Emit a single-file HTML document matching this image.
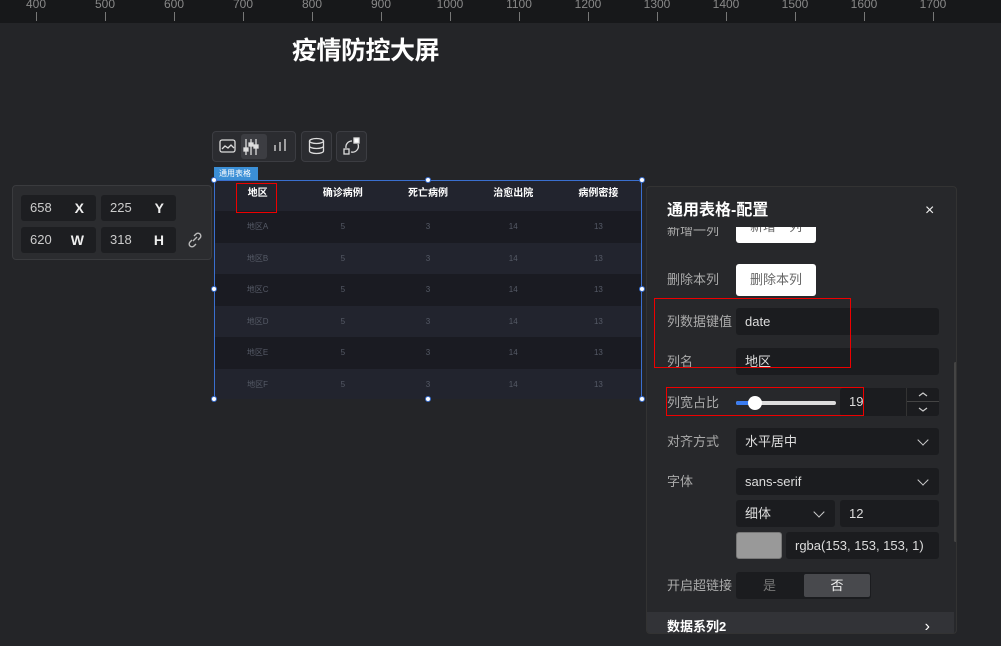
<!DOCTYPE html>
<html><head><meta charset="utf-8"><style>
*{box-sizing:border-box;margin:0;padding:0}
body{width:1001px;height:646px;overflow:hidden;background:#242528;font-family:"Liberation Sans","Noto Sans CJK SC",sans-serif;position:relative;color:#ddd}
.abs{position:absolute}
.ruler{left:0;top:0;width:1001px;height:23px;background:#17181a}
.rl{position:absolute;top:-3px;font-size:12px;color:#888;transform:translateX(-50%);line-height:14px}
.tk{position:absolute;top:12px;width:1px;height:9px;background:#777}
.title{left:292px;top:36px;font-size:25px;line-height:30px;font-weight:bold;color:#fff;letter-spacing:-0.5px}
.tb{background:#2b2c30;border:1px solid #3c3d42;border-radius:4px}
.pos{left:12px;top:185px;width:200px;height:75px;background:#2b2c2f;border:1px solid #3a3b3e;border-radius:4px}
.pf{position:absolute;width:75px;height:26px;background:#1d1e21;border-radius:3px;font-size:13px;color:#ccc;line-height:26px;padding-left:9px}
.pf b{position:absolute;right:12px;color:#eee;font-size:14px}
.tbl{left:214px;top:180px;width:428px;height:219px;border:1px solid #3a6fcf;background:#22242e}
.row{position:absolute;left:0;width:426px;height:31.5px;display:flex}
.row div{flex:1;text-align:center;font-size:8px;color:#555a66;line-height:31px}
.hd div{color:#fff;font-weight:bold;font-size:10px;line-height:26px}
.dot{position:absolute;width:6px;height:6px;border-radius:50%;background:#fff;border:1px solid #3a6fcf}
.panel{left:646px;top:186px;width:311px;height:448px;background:#27282b;border:1px solid #333;border-radius:4px;overflow:hidden}
.lab{position:absolute;left:20px;font-size:13px;color:#aaa;line-height:27px;height:27px}
.inp{position:absolute;background:#1b1c1f;border-radius:3px;font-size:13px;color:#ddd;padding-left:9px;line-height:27px;height:27px}
.btn{position:absolute;left:89px;width:80px;background:#fff;border-radius:3px;color:#666;font-size:13px;text-align:center}
.chev{position:absolute;right:12px;top:8px;width:8px;height:8px;border-right:1.5px solid #ccc;border-bottom:1.5px solid #ccc;transform:rotate(45deg)}
.red{position:absolute;border:1px solid #e00}
</style></head><body>
<div class="abs ruler">
<span class="rl" style="left:36px">400</span><span class="rl" style="left:105px">500</span><span class="rl" style="left:174px">600</span><span class="rl" style="left:243px">700</span><span class="rl" style="left:312px">800</span><span class="rl" style="left:381px">900</span><span class="rl" style="left:450px">1000</span><span class="rl" style="left:519px">1100</span><span class="rl" style="left:588px">1200</span><span class="rl" style="left:657px">1300</span><span class="rl" style="left:726px">1400</span><span class="rl" style="left:795px">1500</span><span class="rl" style="left:864px">1600</span><span class="rl" style="left:933px">1700</span>
<i class="tk" style="left:36px"></i><i class="tk" style="left:105px"></i><i class="tk" style="left:174px"></i><i class="tk" style="left:243px"></i><i class="tk" style="left:312px"></i><i class="tk" style="left:381px"></i><i class="tk" style="left:450px"></i><i class="tk" style="left:519px"></i><i class="tk" style="left:588px"></i><i class="tk" style="left:657px"></i><i class="tk" style="left:726px"></i><i class="tk" style="left:795px"></i><i class="tk" style="left:864px"></i><i class="tk" style="left:933px"></i>
</div>
<div class="abs title">疫情防控大屏</div>

<div class="abs tb" style="left:212px;top:131px;width:84px;height:31px"></div>
<div class="abs" style="left:241px;top:134px;width:26px;height:25px;background:#3c3d42;border-radius:3px"></div>
<svg class="abs" style="left:212px;top:131px" width="160" height="31" fill="none" stroke="#ddd" stroke-width="1.3">
<rect x="8" y="9" width="15" height="12" rx="2"/><path d="M10 18l3-3 3 2 3-3 3 3"/>
<path d="M34 8v16M39 8v16M44 8v16"/><rect x="32" y="17" width="4" height="3" fill="#ddd"/><rect x="37" y="12" width="4" height="3" fill="#ddd"/><rect x="42" y="14" width="4" height="3" fill="#ddd"/>
<path d="M63 20v-6M68 20v-9M73 20v-12"/>
</svg>
<div class="abs tb" style="left:301px;top:131px;width:31px;height:31px"></div>
<svg class="abs" style="left:301px;top:131px" width="31" height="31" fill="none" stroke="#ddd" stroke-width="1.3"><ellipse cx="15.5" cy="10" rx="7" ry="2.5"/><path d="M8.5 10v10c0 1.4 3 2.5 7 2.5s7-1.1 7-2.5V10M8.5 15c0 1.4 3 2.5 7 2.5s7-1.1 7-2.5"/></svg>
<div class="abs tb" style="left:336px;top:131px;width:31px;height:31px"></div>
<svg class="abs" style="left:336px;top:131px" width="31" height="31" fill="none" stroke="#ddd" stroke-width="1.3"><rect x="18" y="7" width="5" height="5" fill="#fff"/><rect x="8" y="18" width="5" height="5"/><path d="M10 17a6 6 0 0 1 6-7M22 13a6 6 0 0 1-7 8"/></svg>

<div class="abs pos">
<div class="pf" style="left:8px;top:9px">658<b>X</b></div>
<div class="pf" style="left:88px;top:9px">225<b>Y</b></div>
<div class="pf" style="left:8px;top:41px">620<b>W</b></div>
<div class="pf" style="left:88px;top:41px">318<b>H</b></div>
<svg style="position:absolute;left:174px;top:46px" width="16" height="16" fill="none" stroke="#bbb" stroke-width="1.4"><path d="M6 9l4-4M7 4l2-2a2.5 2.5 0 0 1 4 4l-2 2M9 12l-2 2a2.5 2.5 0 0 1-4-4l2-2"/></svg>
</div>

<div class="abs" style="left:214px;top:167px;width:44px;height:13px;background:#3b8fd6;font-size:8px;color:#fff;padding-left:5px;line-height:13px">通用表格</div>
<div class="abs tbl">
<div class="row hd" style="top:0;height:30px;background:#22242e"><div>地区</div><div>确诊病例</div><div>死亡病例</div><div>治愈出院</div><div>病例密接</div></div>
<div class="row" style="top:30px;background:#1a1b22"><div>地区A</div><div>5</div><div>3</div><div>14</div><div>13</div></div>
<div class="row" style="top:61.5px;background:#22242e"><div>地区B</div><div>5</div><div>3</div><div>14</div><div>13</div></div>
<div class="row" style="top:93px;background:#1a1b22"><div>地区C</div><div>5</div><div>3</div><div>14</div><div>13</div></div>
<div class="row" style="top:124.5px;background:#22242e"><div>地区D</div><div>5</div><div>3</div><div>14</div><div>13</div></div>
<div class="row" style="top:156px;background:#1a1b22"><div>地区E</div><div>5</div><div>3</div><div>14</div><div>13</div></div>
<div class="row" style="top:187.5px;background:#22242e;height:30px"><div>地区F</div><div>5</div><div>3</div><div>14</div><div>13</div></div>
</div>
<div class="red" style="left:236px;top:183px;width:41px;height:30px"></div>
<i class="dot" style="left:211px;top:177px"></i><i class="dot" style="left:425px;top:177px"></i><i class="dot" style="left:639px;top:177px"></i>
<i class="dot" style="left:211px;top:286px"></i><i class="dot" style="left:639px;top:286px"></i>
<i class="dot" style="left:211px;top:396px"></i><i class="dot" style="left:425px;top:396px"></i><i class="dot" style="left:639px;top:396px"></i>

<div class="abs panel">
<div style="position:absolute;left:20px;top:13px;font-size:16px;line-height:22px;font-weight:bold;color:#fff">通用表格-配置</div>
<div style="position:absolute;left:278px;top:13px;font-size:16px;line-height:22px;color:#eee">×</div>
<div style="position:absolute;left:0;top:40px;width:311px;height:300px;overflow:hidden">
<div class="lab" style="top:-10px">新增一列</div>
<div class="btn" style="top:-16px;height:32px;line-height:32px">新增一列</div>
</div>
<div class="lab" style="top:77px;line-height:32px;height:32px">删除本列</div>
<div class="btn" style="top:77px;height:32px;line-height:32px">删除本列</div>
<div class="lab" style="top:121px">列数据键值</div>
<div class="inp" style="left:89px;top:121px;width:203px">date</div>
<div class="lab" style="top:161px">列名</div>
<div class="inp" style="left:89px;top:161px;width:203px">地区</div>
<div class="lab" style="top:202px">列宽占比</div>
<div style="position:absolute;left:89px;top:214px;width:100px;height:4px;background:#ddd;border-radius:2px"></div>
<div style="position:absolute;left:89px;top:214px;width:18px;height:4px;background:#3a7cf0;border-radius:2px"></div>
<div style="position:absolute;left:101px;top:209px;width:14px;height:14px;background:#fff;border-radius:50%"></div>
<div class="inp" style="left:193px;top:201px;width:99px;height:28px;line-height:28px">19</div>
<div style="position:absolute;left:259px;top:201px;width:33px;height:28px;background:#1b1c1f;border-left:1px solid #333;border-radius:0 3px 3px 0">
<div style="position:absolute;left:0;top:13px;width:32px;height:1px;background:#444"></div>
<svg style="position:absolute;left:0;top:0" width="32" height="28" fill="none" stroke="#ccc" stroke-width="1.2"><path d="M12 8l4-3 4 3M12 20l4 3 4-3"/></svg>
</div>
<div class="lab" style="top:241px">对齐方式</div>
<div class="inp" style="left:89px;top:241px;width:203px">水平居中<i class="chev"></i></div>
<div class="lab" style="top:281px">字体</div>
<div class="inp" style="left:89px;top:281px;width:203px">sans-serif<i class="chev"></i></div>
<div class="inp" style="left:89px;top:313px;width:99px">细体<i class="chev"></i></div>
<div class="inp" style="left:193px;top:313px;width:99px">12</div>
<div style="position:absolute;left:89px;top:345px;width:46px;height:27px;background:#999;border:1px solid #777;border-radius:3px"></div>
<div class="inp" style="left:139px;top:345px;width:153px;padding-left:9px">rgba(153, 153, 153, 1)</div>
<div class="lab" style="top:385px">开启超链接</div>
<div style="position:absolute;left:89px;top:385px;width:135px;height:27px;background:#1b1c1f;border-radius:3px">
<div style="position:absolute;left:0;width:67px;text-align:center;line-height:27px;font-size:13px;color:#777">是</div>
<div style="position:absolute;left:68px;top:2px;width:66px;height:23px;background:#48494d;border-radius:2px;text-align:center;line-height:23px;font-size:13px;color:#eee">否</div></div>
<div style="position:absolute;left:0;top:425px;width:307px;height:30px;background:#323337;font-size:13px;line-height:30px;font-weight:bold;color:#fff;padding:0 20px">数据系列2<span style="position:absolute;right:24px;top:0;font-weight:normal;font-size:16px">›</span></div>
<div style="position:absolute;left:307px;top:175px;width:3px;height:180px;background:#444;border-radius:2px"></div>
</div>
<div class="red" style="left:654px;top:298px;width:197px;height:70px"></div>
<div class="red" style="left:666px;top:387px;width:198px;height:29px"></div>
</body></html>
